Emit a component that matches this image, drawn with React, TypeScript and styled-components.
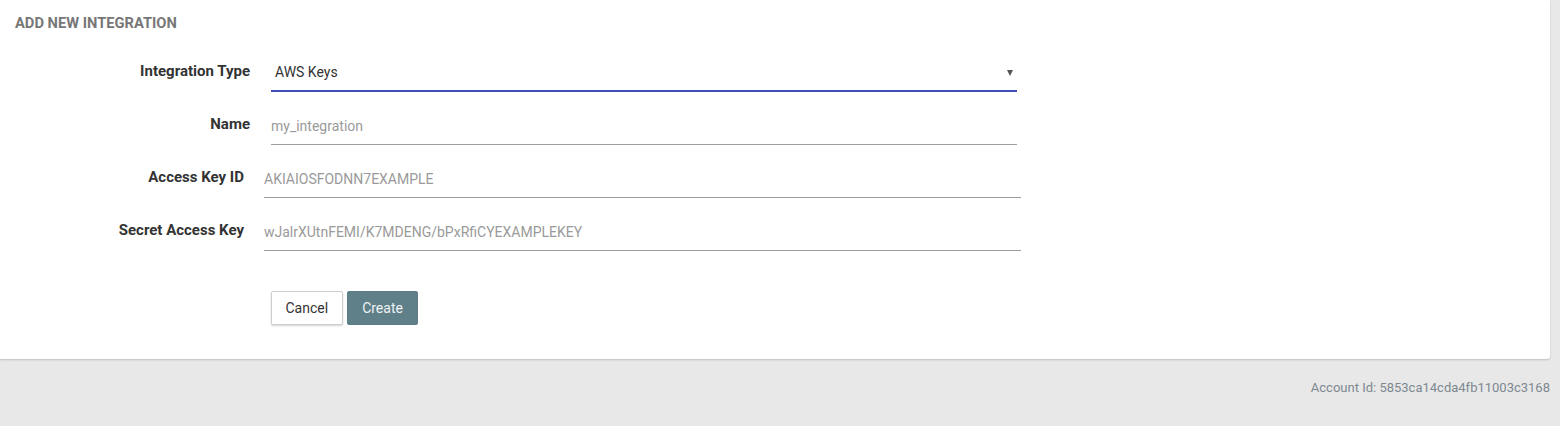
import React from "react";
import styled, { createGlobalStyle } from "styled-components";

const GlobalStyle = createGlobalStyle`
  html, body {
    margin: 0;
    padding: 0;
    background: #e8e8e8;
    font-family: Roboto, "Liberation Sans", Arial, sans-serif;
  }
  * { box-sizing: border-box; }
`;

const Page = styled.div`
  width: 1560px;
  min-height: 426px;
  background: #e8e8e8;
`;

const Card = styled.section`
  width: 1550px;
  height: 359px;
  background: #fff;
  border-radius: 0 0 3px 0;
  box-shadow: 0 1px 2px rgba(0, 0, 0, 0.18);
  padding: 14px 0 0 15px;
`;

const Title = styled.h2`
  margin: 0;
  font-size: 14.7px;
  line-height: 18px;
  font-weight: 700;
  color: #777;
  text-transform: uppercase;
  letter-spacing: 0;
`;

const Form = styled.div<{ $top: number }>`
  display: flex;
  flex-direction: column;
  gap: 14px;
  margin-top: ${(p) => p.$top}px;
`;

const Row = styled.div<{ $labelW: number; $gap: number; $fieldW: number }>`
  display: grid;
  grid-template-columns: ${(p) => p.$labelW}px ${(p) => p.$fieldW}px;
  column-gap: ${(p) => p.$gap}px;
  align-items: start;
`;

const Label = styled.label`
  text-align: right;
  font-size: 15px;
  line-height: 20px;
  font-weight: 700;
  color: #333;
  padding-top: 8px;
`;

const Field = styled.div<{ $active?: boolean; $pad?: number }>`
  position: relative;
  height: 39px;
  display: flex;
  align-items: center;
  padding-left: ${(p) => p.$pad ?? 0}px;
  padding-top: ${(p) => (p.$active ? 0 : 2)}px;
  border-bottom: ${(p) => (p.$active ? "2px solid #3f51b5" : "1px solid #9e9e9e")};
  font-size: 14px;
  color: #333;
`;

const Value = styled.span<{ $placeholder?: boolean }>`
  color: ${(p) => (p.$placeholder ? "#9a9a9a" : "#333")};
  font-size: 14px;
  line-height: 20px;
`;

const Caret = styled.span`
  position: absolute;
  right: 4px;
  top: 17px;
  width: 0;
  height: 0;
  border-left: 3.5px solid transparent;
  border-right: 3.5px solid transparent;
  border-top: 6px solid #555;
`;

const Actions = styled.div`
  display: flex;
  gap: 4px;
  margin-top: 40px;
  padding-left: 256px;
`;

const Button = styled.button<{ $primary?: boolean }>`
  height: 34px;
  padding: 0 ${(p) => (p.$primary ? 14.5 : 13.5)}px;
  font-family: Roboto, "Liberation Sans", Arial, sans-serif;
  font-size: 14px;
  border-radius: 2px;
  cursor: pointer;
  border: 1px solid ${(p) => (p.$primary ? "#5f7d88" : "#cfcfcf")};
  background: ${(p) => (p.$primary ? "#5f7f89" : "#fff")};
  color: ${(p) => (p.$primary ? "#eef3f4" : "#333")};
  box-shadow: ${(p) => (p.$primary ? "none" : "0 1px 2px rgba(0,0,0,0.18)")};
`;

const Footer = styled.footer`
  display: flex;
  justify-content: flex-end;
  padding: 20px 10px 0 0;
  font-size: 13px;
  line-height: 18px;
  color: #7d8891;
`;

type FieldDef = {
  label: string;
  value: string;
  placeholder?: boolean;
  select?: boolean;
};

const group1: FieldDef[] = [
  { label: "Integration Type", value: "AWS Keys", select: true },
  { label: "Name", value: "my_integration", placeholder: true },
];

const group2: FieldDef[] = [
  { label: "Access Key ID", value: "AKIAIOSFODNN7EXAMPLE", placeholder: true },
  {
    label: "Secret Access Key",
    value: "wJalrXUtnFEMI/K7MDENG/bPxRfiCYEXAMPLEKEY",
    placeholder: true,
  },
];

export default function App() {
  return (
    <Page>
      <GlobalStyle />
      <Card>
        <Title>Add New Integration</Title>
        <Form $top={21}>
          {group1.map((f) => (
            <Row key={f.label} $labelW={235} $gap={21} $fieldW={746}>
              <Label>{f.label}</Label>
              <Field $active={f.select} $pad={f.select ? 4 : 0}>
                <Value $placeholder={f.placeholder}>{f.value}</Value>
                {f.select && <Caret />}
              </Field>
            </Row>
          ))}
          {group2.map((f) => (
            <Row key={f.label} $labelW={229} $gap={20} $fieldW={757}>
              <Label>{f.label}</Label>
              <Field>
                <Value $placeholder={f.placeholder}>{f.value}</Value>
              </Field>
            </Row>
          ))}
        </Form>
        <Actions>
          <Button>Cancel</Button>
          <Button $primary>Create</Button>
        </Actions>
      </Card>
      <Footer>Account Id: 5853ca14cda4fb11003c3168</Footer>
    </Page>
  );
}
